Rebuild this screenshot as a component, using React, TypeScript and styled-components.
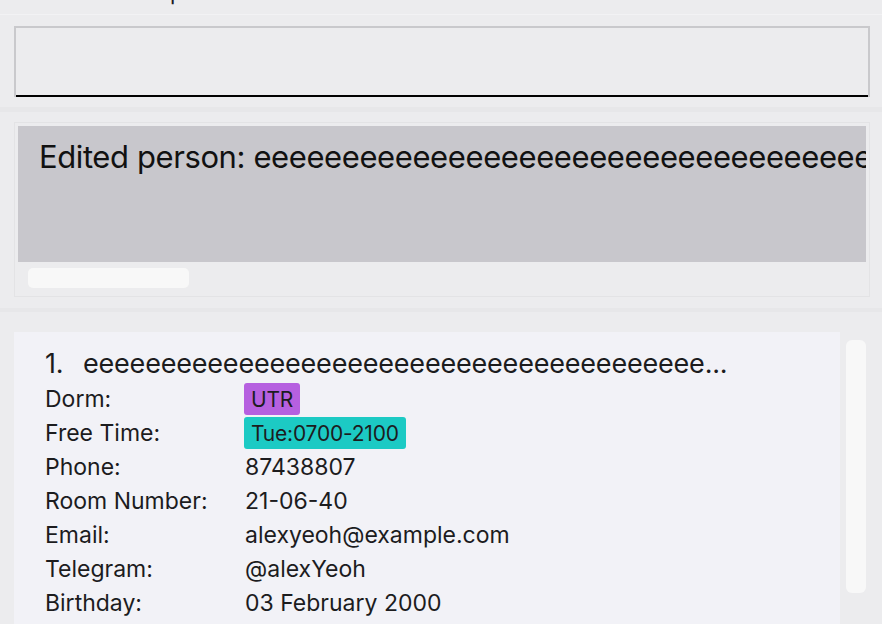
import React from 'react';
import styled, {createGlobalStyle} from 'styled-components';

const GlobalStyle = createGlobalStyle`
  html, body {
    margin: 0;
    padding: 0;
    background: #ececee;
    overflow: hidden;
  }
  body {
    font-family: Inter, "Noto Sans", sans-serif;
    color: #1c1c1e;
  }
`

const Window = styled.div`
  width: 882px;
  height: 624px;
  overflow: hidden;
  display: flex;
  flex-direction: column;
  background: #ececee;
`

const MenuBar = styled.div`
  height: 14px;
  overflow: hidden;
  border-bottom: 1px solid #f2f2f4;
  padding-left: 170px;
`

const MenuText = styled.span`
  display: block;
  font-size: 22px;
  line-height: 22px;
  margin-top: -19px;
  color: #1c1c1e;
`

const CommandSection = styled.div`
  padding: 11px 12px 10px 14px;
`

const CommandInput = styled.input`
  display: block;
  box-sizing: border-box;
  width: 856px;
  height: 71px;
  margin: 0;
  padding: 0 12px;
  background: #ececee;
  border: 2px solid #c9c9cc;
  border-bottom: 0;
  border-radius: 0;
  box-shadow: inset 0 -2px 0 #000;
  outline: none;
  font: inherit;
  font-size: 22px;
`

const Band = styled.div<{h: number}>`
  height: ${p => p.h}px;
  background: #e7e7e9;
`

const ResultSection = styled.div`
  padding: 10px 12px 11px 14px;
`

const ResultBox = styled.div`
  box-sizing: border-box;
  width: 856px;
  height: 175px;
  border: 1px solid #e3e3e5;
  padding: 3px 3px 0 3px;
  display: flex;
  flex-direction: column;
`

const ResultText = styled.div`
  height: 136px;
  box-sizing: border-box;
  background: #c8c7cc;
  padding: 12px 0 0 21px;
  font-size: 31px;
  line-height: 37px;
  letter-spacing: -0.4px;
  white-space: nowrap;
  overflow: hidden;
  color: #111;
`

const HScrollArea = styled.div`
  flex: 1;
  padding: 6px 0 0 10px;
`

const HThumb = styled.div`
  width: 161px;
  height: 20px;
  border-radius: 5px;
  background: #f8f8f8;
`

const ListSection = styled.div`
  flex: 1;
  display: flex;
  padding: 20px 16px 0 14px;
  gap: 6px;
  min-height: 0;
`

const Card = styled.div`
  flex: 1;
  background: #f2f2f7;
  padding: 14px 0 0 31px;
`

const Title = styled.div`
  font-size: 27px;
  line-height: 36px;
  letter-spacing: -0.2px;
  white-space: nowrap;
  color: #1c1c1e;
`

const Index = styled.span`
  display: inline-block;
  width: 38px;
`

const Row = styled.div`
  display: flex;
  align-items: center;
  height: 34px;
  font-size: 23px;
`

const Label = styled.div`
  width: 200px;
  flex-shrink: 0;
`

const Value = styled.div`
  white-space: nowrap;
`

const Tag = styled.span<{bg: string}>`
  display: inline-flex;
  align-items: center;
  height: 32px;
  padding: 0 7px;
  box-sizing: border-box;
  border-radius: 3px;
  background: ${p => p.bg};
  font-size: 21px;
  letter-spacing: -0.2px;
  color: #1c1c1e;
  margin-left: -1px;
`

const VScroll = styled.div`
  width: 20px;
  padding-top: 8px;
`

const VThumb = styled.div`
  height: 253px;
  border-radius: 6px;
  background: #f8f8f8;
`

const name = 'e'.repeat(40);

const fields: {label: string; value?: string; tag?: {text: string; bg: string}}[] = [
    {label: 'Dorm:', tag: {text: 'UTR', bg: '#b660e0'}},
    {label: 'Free Time:', tag: {text: 'Tue:0700-2100', bg: '#1ccac4'}},
    {label: 'Phone:', value: '87438807'},
    {label: 'Room Number:', value: '21-06-40'},
    {label: 'Email:', value: 'alexyeoh@example.com'},
    {label: 'Telegram:', value: '@alexYeoh'},
    {label: 'Birthday:', value: '03 February 2000'},
];

const App = () => {
    return (
        <Window>
            <GlobalStyle/>
            <MenuBar>
                <MenuText>p</MenuText>
            </MenuBar>
            <CommandSection>
                <CommandInput type="text" aria-label="command"/>
            </CommandSection>
            <Band h={5}/>
            <ResultSection>
                <ResultBox>
                    <ResultText>Edited person: {'e'.repeat(60)}</ResultText>
                    <HScrollArea>
                        <HThumb/>
                    </HScrollArea>
                </ResultBox>
            </ResultSection>
            <Band h={4}/>
            <ListSection>
                <Card>
                    <Title><Index>1.</Index>{name}...</Title>
                    {fields.map(f => (
                        <Row key={f.label}>
                            <Label>{f.label}</Label>
                            <Value>
                                {f.tag ? <Tag bg={f.tag.bg}>{f.tag.text}</Tag> : f.value}
                            </Value>
                        </Row>
                    ))}
                </Card>
                <VScroll>
                    <VThumb/>
                </VScroll>
            </ListSection>
        </Window>
    )
}

export default App
